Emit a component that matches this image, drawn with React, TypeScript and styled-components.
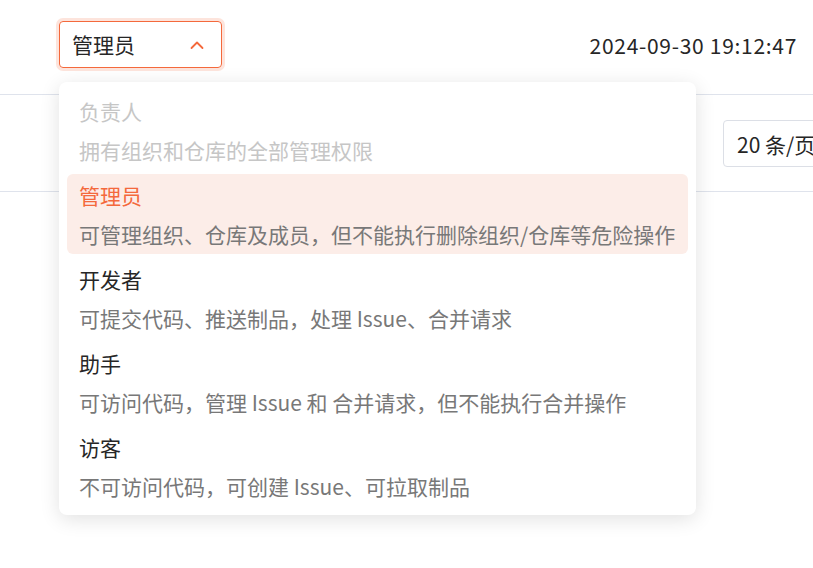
import { useState } from 'react';
import styled, { createGlobalStyle } from 'styled-components';

const ACCENT = '#f4693c';

interface Role {
  name: string;
  desc: string;
  disabled?: boolean;
}

const ROLES: Role[] = [
  { name: '负责人', desc: '拥有组织和仓库的全部管理权限', disabled: true },
  { name: '管理员', desc: '可管理组织、仓库及成员，但不能执行删除组织/仓库等危险操作' },
  { name: '开发者', desc: '可提交代码、推送制品，处理 Issue、合并请求' },
  { name: '助手', desc: '可访问代码，管理 Issue 和 合并请求，但不能执行合并操作' },
  { name: '访客', desc: '不可访问代码，可创建 Issue、可拉取制品' },
];

const ChevronUp = () => (
  <svg width="16" height="16" viewBox="0 0 16 16" fill="none">
    <path d="M2.5 11 L8 5.5 L13.5 11" stroke={ACCENT} strokeWidth="1.8" strokeLinecap="round" strokeLinejoin="round" />
  </svg>
);

const App = () => {
  const [role, setRole] = useState('管理员');
  const [open, setOpen] = useState(true);

  return (
    <Page>
      <GlobalStyle />
      <Header>
        <SelectWrap>
          <RoleSelect $active={open} onClick={() => setOpen(!open)}>
            <span>{role}</span>
            <ChevronUp />
          </RoleSelect>
          {open && (
            <Menu>
              {ROLES.map((r) => (
                <Option
                  key={r.name}
                  $selected={r.name === role}
                  $disabled={!!r.disabled}
                  onClick={() => {
                    if (r.disabled) return;
                    setRole(r.name);
                    setOpen(false);
                  }}
                >
                  <OptionName>{r.name}</OptionName>
                  <OptionDesc>{r.desc}</OptionDesc>
                </Option>
              ))}
            </Menu>
          )}
        </SelectWrap>
        <Clock>2024-09-30 19:12:47</Clock>
      </Header>
      <Toolbar>
        <PageSize>20 条/页</PageSize>
      </Toolbar>
    </Page>
  );
};

export default App;

const GlobalStyle = createGlobalStyle`
  body {
    margin: 0;
    background: #fff;
    overflow: hidden;
    font-family: "Noto Sans CJK SC", "Noto Sans", sans-serif;
    color: #262626;
  }
`;

const Page = styled.div`
  width: 813px;
  height: 568px;
  overflow: hidden;
`;

const Header = styled.div`
  display: flex;
  align-items: flex-start;
  justify-content: space-between;
  height: 95px;
  padding: 21px 16px 0 59px;
  box-sizing: border-box;
  border-bottom: 1px solid #dfe3ec;
`;

const SelectWrap = styled.div`
  position: relative;
  z-index: 2;
`;

const RoleSelect = styled.div<{ $active: boolean }>`
  display: flex;
  align-items: center;
  justify-content: space-between;
  width: 163px;
  height: 47px;
  padding: 0 16px 0 12px;
  box-sizing: border-box;
  border: 1px solid ${(p) => (p.$active ? ACCENT : '#dcdfe6')};
  border-radius: 4px;
  box-shadow: ${(p) => (p.$active ? '0 0 0 3px rgba(244, 105, 60, 0.18)' : 'none')};
  font-size: 21px;
  line-height: 1;
  cursor: pointer;
`;

const Clock = styled.div`
  margin-top: 9px;
  font-size: 21px;
  letter-spacing: 0.7px;
  color: #262626;
`;

const Menu = styled.div`
  position: absolute;
  top: 61px;
  left: 0;
  width: 637px;
  padding: 8px 8px 9px;
  box-sizing: border-box;
  display: flex;
  flex-direction: column;
  gap: 4px;
  background: #fff;
  border-radius: 8px;
  box-shadow: 0 4px 20px rgba(0, 0, 0, 0.12);
`;

const Option = styled.div<{ $selected: boolean; $disabled: boolean }>`
  height: 80px;
  padding: 6px 12px 5px;
  box-sizing: border-box;
  border-radius: 6px;
  background: ${(p) => (p.$selected ? '#fcede8' : 'transparent')};
  color: ${(p) => (p.$disabled ? '#c6c6c6' : p.$selected ? ACCENT : '#262626')};
  cursor: ${(p) => (p.$disabled ? 'not-allowed' : 'pointer')};

  & > div:last-child {
    color: ${(p) => (p.$disabled ? '#c6c6c6' : '#787878')};
  }
`;

const OptionName = styled.div`
  font-size: 21px;
  line-height: 30px;
`;

const OptionDesc = styled.div`
  margin-top: 9px;
  font-size: 21px;
  line-height: 30px;
  white-space: nowrap;
`;

const Toolbar = styled.div`
  display: flex;
  justify-content: flex-end;
  height: 97px;
  padding-top: 25px;
  box-sizing: border-box;
  border-bottom: 1px solid #dfe3ec;
`;

const PageSize = styled.div`
  flex-shrink: 0;
  width: 130px;
  height: 47px;
  margin-right: -40px;
  padding-left: 13px;
  box-sizing: border-box;
  display: flex;
  align-items: center;
  border: 1px solid #dcdfe6;
  border-radius: 4px;
  font-size: 21px;
  white-space: nowrap;
`;
